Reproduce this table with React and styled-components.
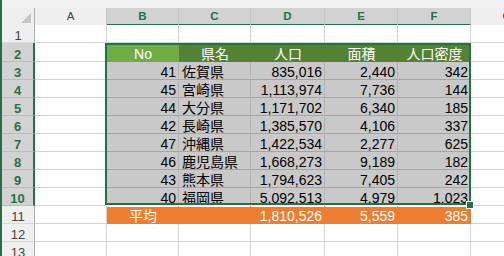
import React from "react";
import styled, { createGlobalStyle } from "styled-components";

const GREEN = "#217346";

const GlobalStyle = createGlobalStyle`
  html, body {
    margin: 0;
    padding: 0;
    background: #fff;
  }
  body {
    font-family: "Liberation Sans", "Noto Sans CJK JP", sans-serif;
  }
`;

const COLS = "33px 72px 72px 72px 74px 73px 73px 73px";

const Sheet = styled.div`
  position: relative;
  width: 504px;
  height: 256px;
  overflow: hidden;
  box-sizing: border-box;
  border-left: 2px solid ${GREEN};
  background: #fff;
`;

const TopBand = styled.div`
  height: 8px;
  background: #f0f0f0;
`;

const Row = styled.div`
  display: grid;
  grid-template-columns: ${COLS};
  height: ${(p) => p.$h || 18}px;
`;

const Corner = styled.div`
  display: flex;
  align-items: flex-end;
  justify-content: flex-end;
  padding: 0 3px 2px 0;
  background: #efefef;
  border-right: 1px solid #ababab;
  border-bottom: 1px solid #ababab;
  box-sizing: border-box;
`;

const ColHead = styled.div`
  background: ${(p) => (p.$on ? "#d2d2d2" : "#efefef")};
  color: ${(p) => (p.$on ? GREEN : "#444")};
  font-weight: ${(p) => (p.$on ? 700 : 400)};
  font-size: 11.5px;
  line-height: 16px;
  text-align: center;
  border-right: 1px solid #c6c6c6;
  border-bottom: ${(p) => (p.$on ? `2px solid ${GREEN}` : "1px solid #ababab")};
  box-sizing: border-box;
`;

const RowHead = styled.div`
  display: flex;
  align-items: flex-end;
  justify-content: center;
  background: ${(p) => (p.$on ? "#d2d2d2" : "#efefef")};
  color: ${(p) => (p.$on ? GREEN : "#444")};
  font-weight: ${(p) => (p.$on ? 700 : 400)};
  font-size: 13px;
  line-height: 13px;
  border-right: ${(p) => (p.$on ? `2px solid ${GREEN}` : "1px solid #ababab")};
  border-bottom: 1px solid ${(p) => (p.$on ? "#bcbcbc" : "#d9d9d9")};
  box-sizing: border-box;
`;

const KINDS = {
  plain: { bg: "#fff", fg: "#000", r: "#d4d4d4", b: "#d4d4d4" },
  data: { bg: "#c9c9c9", fg: "#000", r: "#b4b4b4", b: "#a5a5a5" },
  head: { bg: "#548235", fg: "#fff", r: "#548235", b: "#548235" },
  headLight: { bg: "#70ad47", fg: "#fff", r: "#70ad47", b: "#70ad47" },
  avg: { bg: "#ed7d31", fg: "#fff", r: "#ed7d31", b: "#ed7d31" },
};

const Cell = styled.div`
  display: flex;
  align-items: flex-end;
  justify-content: ${(p) =>
    p.$align === "right" ? "flex-end" : p.$align === "center" ? "center" : "flex-start"};
  padding: 0 2px 0 3px;
  box-sizing: border-box;
  overflow: hidden;
  white-space: nowrap;
  font-size: 14px;
  line-height: 14px;
  background: ${(p) => KINDS[p.$kind || "plain"].bg};
  color: ${(p) => KINDS[p.$kind || "plain"].fg};
  border-right: 1px solid ${(p) => KINDS[p.$kind || "plain"].r};
  border-bottom: 1px solid ${(p) => KINDS[p.$kind || "plain"].b};
  box-shadow: ${(p) => (p.$kind === "avg" ? "inset 0 1px 0 #fff" : "none")};
`;

const Selection = styled.div`
  position: absolute;
  left: 103px;
  top: 43px;
  width: 366px;
  height: 162px;
  box-sizing: border-box;
  border: 2px solid ${GREEN};
  box-shadow: 0 1px 0 #fff;
  pointer-events: none;
`;

const FillHandle = styled.div`
  position: absolute;
  left: 464px;
  top: 201px;
  width: 8px;
  height: 8px;
  box-sizing: border-box;
  background: ${GREEN};
  border: 1px solid #fff;
`;

const letters = ["A", "B", "C", "D", "E", "F", "G"];

const header = ["No", "県名", "人口", "面積", "人口密度"];

const data = [
  [41, "佐賀県", "835,016", "2,440", "342"],
  [45, "宮崎県", "1,113,974", "7,736", "144"],
  [44, "大分県", "1,171,702", "6,340", "185"],
  [42, "長崎県", "1,385,570", "4,106", "337"],
  [47, "沖縄県", "1,422,534", "2,277", "625"],
  [46, "鹿児島県", "1,668,273", "9,189", "182"],
  [43, "熊本県", "1,794,623", "7,405", "242"],
  [40, "福岡県", "5,092,513", "4,979", "1,023"],
];

const average = ["平均", "", "1,810,526", "5,559", "385"];

const App = () => (
  <>
    <GlobalStyle />
    <Sheet>
      <TopBand />
      <Row $h={17}>
        <Corner>
          <svg width="10" height="10" viewBox="0 0 10 10">
            <polygon points="10,0 10,10 0,10" fill="#c4c4c4" />
          </svg>
        </Corner>
        {letters.map((l, i) => (
          <ColHead key={l} $on={i >= 1 && i <= 5}>
            {l}
          </ColHead>
        ))}
      </Row>

      <Row>
        <RowHead>1</RowHead>
        {letters.map((l) => (
          <Cell key={l} />
        ))}
      </Row>

      <Row $h={19}>
        <RowHead $on>2</RowHead>
        <Cell />
        {header.map((h, i) => (
          <Cell key={h} $kind={i === 0 ? "headLight" : "head"} $align="center">
            {h}
          </Cell>
        ))}
        <Cell />
      </Row>

      {data.map((r, n) => (
        <Row key={r[1]}>
          <RowHead $on>{n + 3}</RowHead>
          <Cell />
          {r.map((v, i) => (
            <Cell key={i} $kind="data" $align={i === 1 ? "left" : "right"}>
              {v}
            </Cell>
          ))}
          <Cell />
        </Row>
      ))}

      <Row>
        <RowHead>11</RowHead>
        <Cell />
        {average.map((v, i) => (
          <Cell key={i} $kind="avg" $align={i === 0 ? "center" : "right"}>
            {v}
          </Cell>
        ))}
        <Cell />
      </Row>

      {[12, 13].map((n) => (
        <Row key={n}>
          <RowHead>{n}</RowHead>
          {letters.map((l) => (
            <Cell key={l} />
          ))}
        </Row>
      ))}

      <Selection />
      <FillHandle />
    </Sheet>
  </>
);

export default App;
